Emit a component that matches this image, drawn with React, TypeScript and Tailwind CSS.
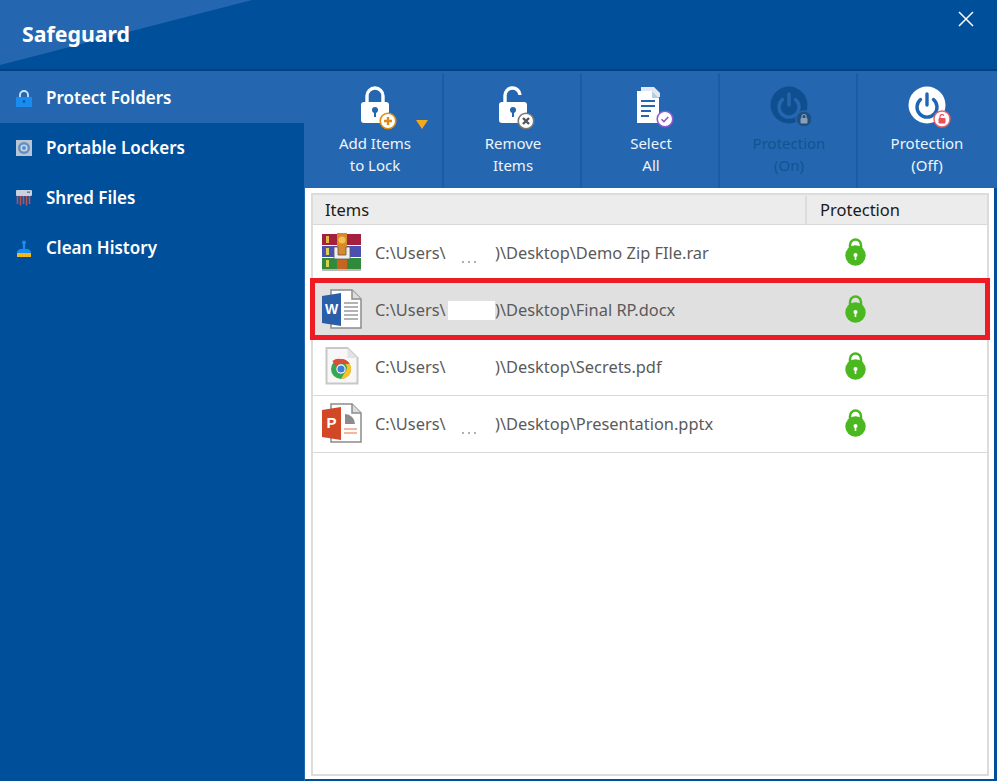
const font = "font-['Noto_Sans','Open_Sans',sans-serif]";

function PadLock({ open = false, color = 'white', hole = '#2467b0' }: { open?: boolean; color?: string; hole?: string }) {
  return (
    <svg width="30" height="38" viewBox="0 0 30 38" className="block">
      <path
        d={open ? 'M7 18V10a7.5 7.5 0 0 1 15-1' : 'M7 18V10a8 8 0 0 1 16 0v8'}
        fill="none"
        stroke={color}
        strokeWidth="3.4"
      />
      <rect x="1" y="16" width="28" height="21" rx="3" fill={color} />
      <circle cx="15" cy="24" r="3" fill={hole} />
      <rect x="14" y="25" width="2" height="6" fill={hole} />
    </svg>
  );
}

function Badge({ border, children }: { border: string; children: React.ReactNode }) {
  return (
    <svg width="18" height="18" viewBox="0 0 18 18" className="absolute right-[-7px] bottom-[-6px]">
      <circle cx="9" cy="9" r="7.8" fill="white" stroke={border} strokeWidth="1.6" />
      {children}
    </svg>
  );
}

function PowerIcon({ dim = false }: { dim?: boolean }) {
  const disc = dim ? '#0f4f8f' : '#ffffff';
  const mark = dim ? '#2467b0' : '#1e66b4';
  return (
    <div className="relative h-[38px] w-[38px]">
      <svg width="38" height="38" viewBox="0 0 38 38" className="block">
        <circle cx="19" cy="19" r="18.5" fill={disc} />
        <path d="M12.5 13.5a10 10 0 1 0 13 0" fill="none" stroke={mark} strokeWidth="3.4" strokeLinecap="round" />
        <path d="M19 8v11" stroke={mark} strokeWidth="3.4" strokeLinecap="round" />
      </svg>
      <svg width="18" height="18" viewBox="0 0 18 18" className="absolute right-[-5px] bottom-[-4px]">
        <circle cx="9" cy="9" r="8" fill={dim ? '#1d4f80' : '#ffffff'} stroke={dim ? '#2467b0' : '#e8606a'} strokeWidth="1.4" />
        <rect x="5.5" y="8" width="7" height="5.5" rx="1" fill={dim ? '#8aa0b8' : '#e8505a'} />
        <path d={dim ? 'M7 8V6.5a2 2 0 0 1 4 0V8' : 'M7 8V6.5a2 2 0 0 1 3.8-.8'} fill="none" stroke={dim ? '#8aa0b8' : '#e8505a'} strokeWidth="1.2" />
      </svg>
    </div>
  );
}

function SelectIcon() {
  return (
    <div className="relative h-[38px] w-[34px]">
      <svg width="34" height="38" viewBox="0 0 34 38" className="block">
        <path d="M7 1h13l6 6v4H7z" fill="#dfe8f3" />
        <path d="M3 5h15l7 7v25H3z" fill="white" />
        <path d="M18 5v7h7z" fill="#b9cbe0" />
        <path d="M7 15h14M7 20h14M7 25h10M7 30h8" stroke="#2467b0" strokeWidth="1.8" />
      </svg>
      <svg width="18" height="18" viewBox="0 0 18 18" className="absolute right-[-6px] bottom-[-4px]">
        <circle cx="9" cy="9" r="7.8" fill="white" stroke="#8a5bd0" strokeWidth="1.6" />
        <path d="M5.5 9.2l2.4 2.4 4.4-4.6" fill="none" stroke="#8a5bd0" strokeWidth="1.6" />
      </svg>
    </div>
  );
}

function ToolButton({
  icon,
  lines,
  dim = false,
  last = false,
  menu = false,
}: {
  icon: React.ReactNode;
  lines: [string, string];
  dim?: boolean;
  last?: boolean;
  menu?: boolean;
}) {
  return (
    <div className={`relative flex w-[138px] flex-col items-center pt-[13px] ${last ? '' : 'border-r-2 border-[#1a5da6] pl-[2px]'}`}>
      <div className="flex h-[38px] items-center justify-center">{icon}</div>
      <div className={`mt-[8px] text-center text-[15px] leading-[22px] ${dim ? 'text-[#0f558f]' : 'text-[#eef4fb]'}`}>
        <div>{lines[0]}</div>
        <div>{lines[1]}</div>
      </div>
      {menu && (
        <div className="absolute left-[110px] top-[47px] h-0 w-0 border-x-[6.5px] border-t-[9px] border-x-transparent border-t-[#f5a81c]" />
      )}
    </div>
  );
}

function NavIcon({ name }: { name: string }) {
  if (name === 'lock') {
    return (
      <svg width="16" height="17" viewBox="0 0 16 17">
        <path d="M4 8V5a4 4 0 0 1 8 0v3" fill="none" stroke="#cfe4fa" strokeWidth="1.8" />
        <rect y="7" width="16" height="10" fill="#1a8cf0" />
        <circle cx="8" cy="11.5" r="1.4" fill="#0b5aa5" />
      </svg>
    );
  }
  if (name === 'disc') {
    return (
      <svg width="16" height="16" viewBox="0 0 16 16">
        <rect width="16" height="16" fill="#b9c5d2" />
        <circle cx="8" cy="8" r="6" fill="#5f8fc4" />
        <circle cx="8" cy="8" r="3.6" fill="#c8d8e8" />
        <circle cx="8" cy="8" r="2" fill="#5f8fc4" />
      </svg>
    );
  }
  if (name === 'shred') {
    return (
      <svg width="16" height="16" viewBox="0 0 16 16">
        <rect y="0" width="16" height="6" rx="1" fill="#c9d2dc" />
        <rect x="11" y="1.5" width="3" height="1.4" fill="#5f7d9e" />
        <path d="M1.5 6v8M4.5 6v9.5M7.5 6v8M10.5 6v9.5M13.5 6v8" stroke="#b5525a" strokeWidth="1.6" />
      </svg>
    );
  }
  return (
    <svg width="16" height="17" viewBox="0 0 16 17">
      <circle cx="8" cy="2.5" r="2" fill="#1a8cf0" />
      <rect x="6.8" y="3" width="2.4" height="6" fill="#1a8cf0" />
      <path d="M1 13c0-2.5 2-4 4-4h6c2 0 4 1.5 4 4z" fill="#1a8cf0" />
      <rect x="1" y="13" width="14" height="4" fill="#f5b51c" />
    </svg>
  );
}

function RarIcon() {
  return (
    <svg width="40" height="38" viewBox="0 0 40 38">
      <rect y="1" width="39" height="11" fill="#a3203f" />
      <rect y="13" width="39" height="11" fill="#4d4fb0" />
      <rect y="25" width="39" height="11" fill="#2f8a3c" />
      <rect x="4" y="3" width="3" height="7" fill="#e0b84a" />
      <rect x="4" y="15" width="3" height="7" fill="#d8d050" />
      <rect x="4" y="27" width="3" height="7" fill="#d8d050" />
      <rect x="15" y="0" width="10" height="37" fill="#d9882a" />
      <rect x="15" y="25" width="10" height="11" fill="#c8641e" />
      <circle cx="20" cy="7" r="3.5" fill="#f2c14e" />
      <path d="M12 14h4v8h8v-8h4v12H12z" fill="#eeeeee" stroke="#555555" strokeWidth="0.8" />
      <rect y="36" width="39" height="2" fill="#b8b8b8" />
    </svg>
  );
}

function WordIcon() {
  return (
    <svg width="40" height="40" viewBox="0 0 40 40">
      <path d="M9 1h21l9 9v29H9z" fill="white" stroke="#8c8c8c" strokeWidth="1.5" />
      <path d="M30 1v9h9" fill="#dddddd" stroke="#8c8c8c" strokeWidth="1.5" />
      <path d="M22 14h14M22 18h14M22 22h14M22 26h14M22 30h14" stroke="#9a9a9a" strokeWidth="1.5" />
      <path d="M0 7l19 -3v33l-19 -3z" fill="#2b5ea8" />
      <text x="9.5" y="25" textAnchor="middle" fontSize="14" fontWeight="700" fill="white" fontFamily="'Liberation Sans',sans-serif">W</text>
    </svg>
  );
}

function ChromeIcon() {
  return (
    <svg width="34" height="38" viewBox="0 0 34 38">
      <path d="M1.5 1h21l10 10v25.5h-31z" fill="#f7f7f7" stroke="#c8c8c8" strokeWidth="2" />
      <path d="M22.5 1v10h10" fill="#e2e2e2" />
      <circle cx="16" cy="22" r="10" fill="#34a853" />
      <path d="M16 12a10 10 0 0 1 8.7 5H16a5 5 0 0 0-4.6 3l-4-6A10 10 0 0 1 16 12z" fill="#dd4b39" />
      <path d="M24.7 17A10 10 0 0 1 16 32l4.3-7.5a5 5 0 0 0 0-7.5z" fill="#fbc02d" />
      <circle cx="16" cy="22" r="4.7" fill="white" />
      <circle cx="16" cy="22" r="3.6" fill="#3f7fe0" />
    </svg>
  );
}

function PptIcon() {
  return (
    <svg width="40" height="40" viewBox="0 0 40 40">
      <path d="M9 1h21l9 9v29H9z" fill="white" stroke="#8c8c8c" strokeWidth="1.5" />
      <path d="M30 1v9h9" fill="#dddddd" stroke="#8c8c8c" strokeWidth="1.5" />
      <path d="M23 11v10h10a10 10 0 0 0-10-10z" fill="#8c8c8c" />
      <path d="M22 26h13M22 30h13" stroke="#eea080" strokeWidth="1.5" />
      <path d="M0 7l19 -3v33l-19 -3z" fill="#d24726" />
      <text x="9.5" y="25" textAnchor="middle" fontSize="15" fontWeight="700" fill="white" fontFamily="'Liberation Sans',sans-serif">P</text>
    </svg>
  );
}

function GreenLock() {
  return (
    <svg width="21" height="28" viewBox="0 0 21 28" className="block">
      <path d="M5 12V7a5.5 5.5 0 0 1 11 0v5" fill="none" stroke="#4cb81f" strokeWidth="2.5" />
      <circle cx="10.5" cy="17.5" r="10.2" fill="#4cb81f" />
      <circle cx="10.5" cy="17" r="2" fill="white" />
      <rect x="9.7" y="17" width="1.6" height="5" fill="white" />
    </svg>
  );
}

const navItems = [
  { name: 'lock', label: 'Protect Folders' },
  { name: 'disc', label: 'Portable Lockers' },
  { name: 'shred', label: 'Shred Files' },
  { name: 'clean', label: 'Clean History' },
];

const rows = [
  { icon: <RarIcon />, file: 'Demo Zip FIle.rar', specks: true },
  { icon: <WordIcon />, file: 'Final RP.docx', selected: true },
  { icon: <ChromeIcon />, file: 'Secrets.pdf' },
  { icon: <PptIcon />, file: 'Presentation.pptx', specks: true },
];

export default function App() {
  return (
    <div className={`${font} flex h-[781px] w-[997px] flex-col overflow-hidden bg-[#004f9a] text-white`}>
      {/* title bar */}
      <header className="relative flex h-[71px] shrink-0 items-start border-b-2 border-[#003f80] pl-[22px] pt-[18px]">
        <svg width="260" height="66" viewBox="0 0 260 66" className="absolute left-0 top-0">
          <polygon points="0,0 252,0 0,65" fill="#2467b0" />
        </svg>
        <h1 className="relative text-[21.3px] font-bold leading-[32px]">Safeguard</h1>
        <svg width="16" height="16" viewBox="0 0 16 16" className="absolute left-[958px] top-[11px]">
          <path d="M1 1l14 14M15 1L1 15" stroke="white" strokeWidth="1.5" />
        </svg>
      </header>

      <div className="flex min-h-0 flex-1 bg-[#2467b0] pt-[2px]">
        {/* sidebar */}
        <nav className="w-[304px] shrink-0 bg-[#004f9a]">
          {navItems.map((item, i) => (
            <div key={item.name} className={`flex h-[50px] items-center gap-[14px] pl-[16px] ${i === 0 ? 'bg-[#2467b0]' : ''}`}>
              <NavIcon name={item.name} />
              <span className="text-[17px] font-semibold">{item.label}</span>
            </div>
          ))}
        </nav>

        {/* main */}
        <main className="flex min-w-0 flex-1 flex-col">
          <div className="flex h-[115px] shrink-0 pl-[2px]">
            <ToolButton
              menu
              lines={['Add Items', 'to Lock']}
              icon={
                <div className="relative">
                  <PadLock />
                  <Badge border="#e08a10">
                    <path d="M9 5v8M5 9h8" stroke="#e08a10" strokeWidth="2.4" />
                  </Badge>
                </div>
              }
            />
            <ToolButton
              lines={['Remove', 'Items']}
              icon={
                <div className="relative">
                  <PadLock open />
                  <Badge border="#777777">
                    <path d="M6 6l6 6M12 6l-6 6" stroke="#555555" strokeWidth="2.4" />
                  </Badge>
                </div>
              }
            />
            <ToolButton lines={['Select', 'All']} icon={<SelectIcon />} />
            <ToolButton dim lines={['Protection', '(On)']} icon={<PowerIcon dim />} />
            <ToolButton last lines={['Protection', '(Off)']} icon={<PowerIcon />} />
          </div>

          {/* list panel */}
          <div className="ml-[1px] flex min-h-0 flex-1 border-b-2 border-r-[3px] border-[#004f9a] bg-white pb-[3px] pl-[6px] pr-[5px] pt-[5px]">
            <div className="relative flex-1 border-2 border-[#dcdcdc]">
              <div className="flex h-[30px] border-b border-[#d8d8d8] bg-[#ececec] pt-px text-[16.5px] text-[#1a1a1a]">
                <div className="flex w-[494px] items-center border-r-2 border-[#dcdcdc] pl-[12px]">Items</div>
                <div className="flex flex-1 items-center pl-[13px]">Protection</div>
              </div>
              {rows.map((row) => (
                <div
                  key={row.file}
                  className={`flex h-[57px] items-center border-b border-[#d8d8d8] text-[16.4px] text-[#5a5a5a] ${row.selected ? 'bg-[#e0e0e0]' : ''}`}
                >
                  <div className="flex w-[62px] justify-center pb-[2px] pr-[5px]">{row.icon}</div>
                  <span className="w-[73px]">C:\Users\</span>
                  {/* path segment blanked out in the original capture */}
                  <span className={`relative h-[19px] w-[47px] ${row.selected ? 'bg-white' : ''}`}>
                    {row.specks && (
                      <span className="absolute left-[14px] top-[17px] flex gap-[4px]">
                        <span className="h-[2px] w-[2px] bg-[#b0b0b0]" />
                        <span className="h-[2px] w-[2px] bg-[#b0b0b0]" />
                        <span className="h-[2px] w-[2px] bg-[#b0b0b0]" />
                      </span>
                    )}
                  </span>
                  <span className="whitespace-nowrap">{`)\\Desktop\\${row.file}`}</span>
                  <span className="flex-1" />
                  <div className="mb-[2px] mr-[121px]">
                    <GreenLock />
                  </div>
                </div>
              ))}
              {/* red highlight drawn over the second row */}
              <div className="absolute left-[-3px] top-[83px] h-[62px] w-[680px] border-[5px] border-[#ed1c24]" />
            </div>
          </div>
        </main>
      </div>
    </div>
  );
}
